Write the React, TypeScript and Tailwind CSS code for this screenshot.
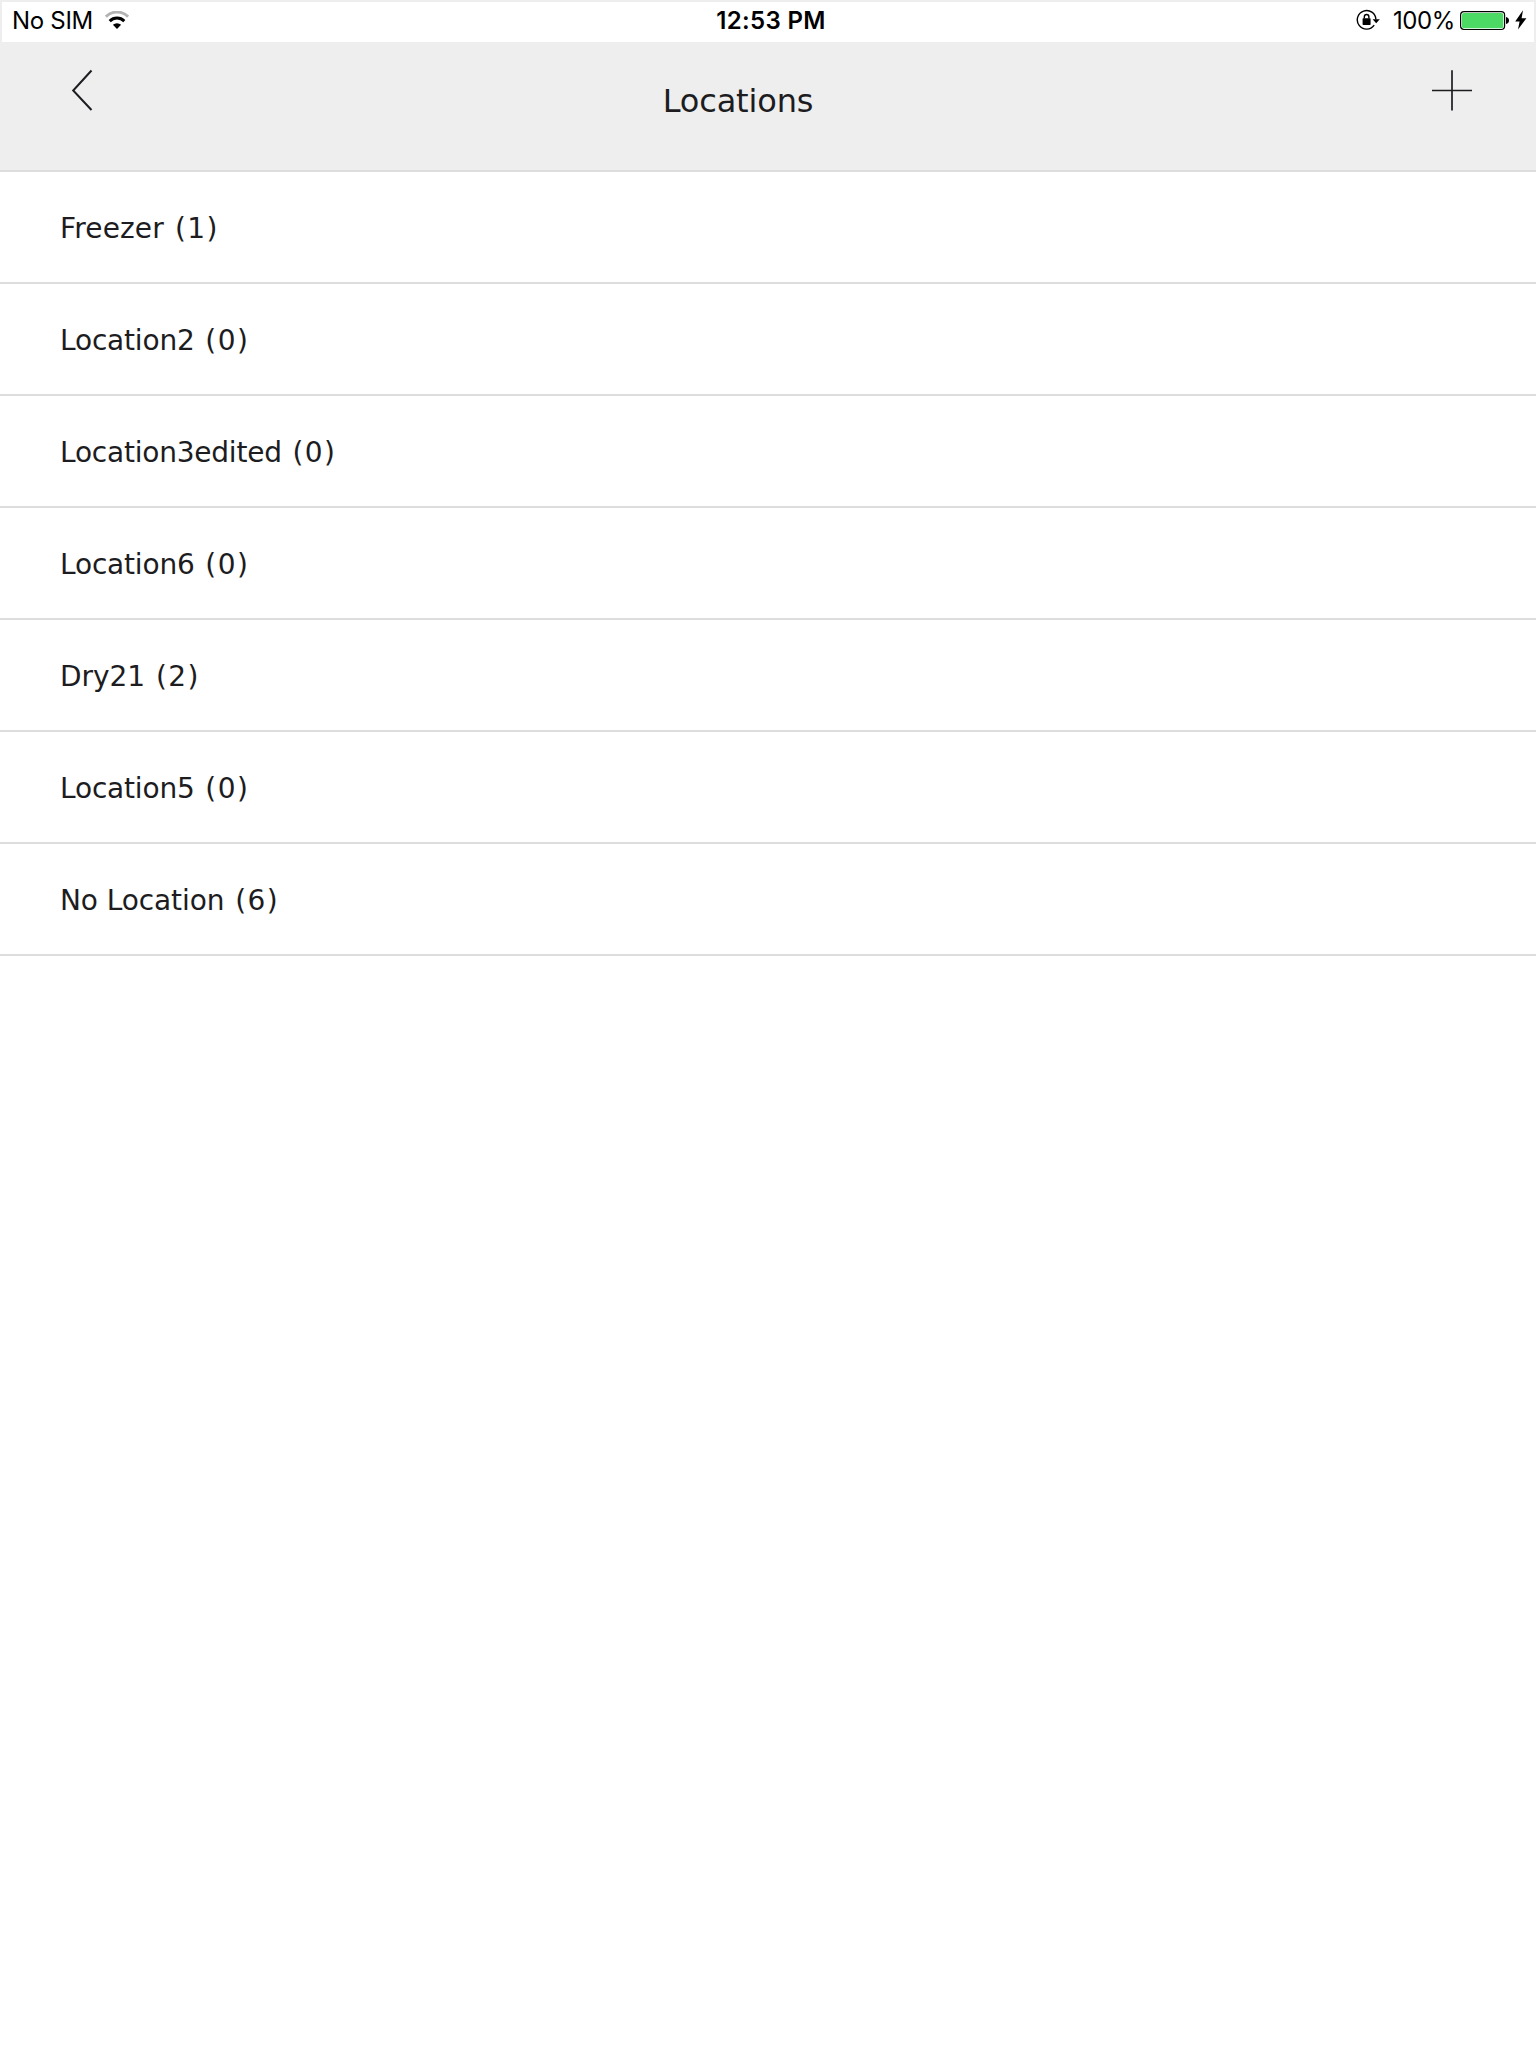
const locations = [
  { name: "Freezer", count: 1, track: "tracking-[0.15px]" },
  { name: "Location2", count: 0, track: "tracking-[-0.18px]" },
  { name: "Location3edited", count: 0, track: "tracking-[-0.22px]" },
  { name: "Location6", count: 0, track: "tracking-[-0.18px]" },
  { name: "Dry21", count: 2, track: "tracking-[-0.05px]" },
  { name: "Location5", count: 0, track: "tracking-[-0.18px]" },
  { name: "No Location", count: 6, track: "tracking-[-0.1px]" },
];

function WifiIcon() {
  return (
    <svg className="ml-3 h-5 w-6" viewBox="0 0 24 20" fill="none">
      <path d="M0.9 5.7A15.6 15.6 0 0 1 23.1 5.7" stroke="#b3b3b3" strokeWidth="3" />
      <path d="M4.7 10.1A10.4 10.4 0 0 1 19.3 10.1" stroke="#000" strokeWidth="3" />
      <path d="M12 18L7.9 13.8A6 6 0 0 1 16.1 13.8Z" fill="#000" />
    </svg>
  );
}

function RotationLockIcon() {
  return (
    <svg className="h-6 w-6" viewBox="0 0 24 24" fill="none">
      <path d="M18.2 16.2A9.3 9.3 0 1 1 19.9 10.6" stroke="#000" strokeWidth="1.4" />
      <path d="M16.6 10.2H23.8L20.2 14.2Z" fill="#000" />
      <path d="M8.3 9.6V7.9a2.3 2.4 0 0 1 4.6 0V9.6" stroke="#000" strokeWidth="1.4" />
      <rect x="6.6" y="9.2" width="8" height="6.8" rx="0.7" fill="#000" />
    </svg>
  );
}

function BatteryIcon() {
  return (
    <svg className="h-5 w-[50px]" viewBox="0 0 50 20" fill="none">
      <rect x="0.6" y="0.6" width="44" height="17.9" rx="3.4" stroke="#000" strokeWidth="1.2" />
      <rect x="1.9" y="1.9" width="41.4" height="15.3" rx="2" fill="#4cd964" />
      <path d="M46 6.1C48 6.6 49 7.8 49 9.6S48 12.6 46 13.1Z" fill="#000" />
    </svg>
  );
}

function BoltIcon() {
  return (
    <svg className="h-5 w-3 overflow-visible" viewBox="0 0 12 20">
      <path d="M8 -0.8L0.2 10.4H4.6L3 18.6L11.4 7.2H6.6Z" fill="#000" />
    </svg>
  );
}

export default function App() {
  return (
    <div className="min-h-[2048px] w-full bg-white font-['DejaVu_Sans',sans-serif] text-[#1c1c21]">
      <div className="grid h-[42px] grid-cols-3 border-x-2 border-t-2 border-[#eee] bg-white font-['Inter',sans-serif] text-2xl leading-[38px] text-black">
        <div className="flex h-[38px] items-center pl-[10px]">
          <span className="tracking-[-0.3px]">No SIM</span>
          <WifiIcon />
        </div>
        <div className="pl-[6px] text-center font-semibold tracking-[0.35px]">12:53 PM</div>
        <div className="flex h-[38px] items-center justify-end pr-[7px]">
          <RotationLockIcon />
          <span className="ml-[13px] tracking-[-0.4px]">100%</span>
          <span className="ml-[5px] flex"><BatteryIcon /></span>
          <span className="ml-[5px] flex"><BoltIcon /></span>
        </div>
      </div>
      <header className="flex h-[130px] items-start justify-between border-b-2 border-[#ddd] bg-[#eee] px-[60px]">
        <button className="mt-[26px] ml-[11px] block" aria-label="Back">
          <svg className="h-11 w-6" viewBox="0 0 24 44" fill="none" stroke="#1c1c21" strokeWidth="2">
            <path d="M20.5 2.5L2.2 22.5L20.5 42" />
          </svg>
        </button>
        <h1 className="mt-[39px] mr-[51px] text-[32px] leading-10 tracking-[-0.15px]">Locations</h1>
        <button className="mt-[28px] mr-[4px] block" aria-label="Add location">
          <svg className="h-[41px] w-10" viewBox="0 0 40 41" fill="none" stroke="#1c1c21" strokeWidth="1.7">
            <path d="M0 20.5H40M20 0.3V40.5" />
          </svg>
        </button>
      </header>
      <ul>
        {locations.map((l) => (
          <li key={l.name} className="flex h-[112px] items-center whitespace-pre border-b-2 border-[#ddd] pt-1 pl-[60px] text-[28px]">
            <span className={l.track}>{l.name} </span>
            <span className="ml-[2px] tracking-[1.4px]">({l.count})</span>
          </li>
        ))}
      </ul>
    </div>
  );
}
